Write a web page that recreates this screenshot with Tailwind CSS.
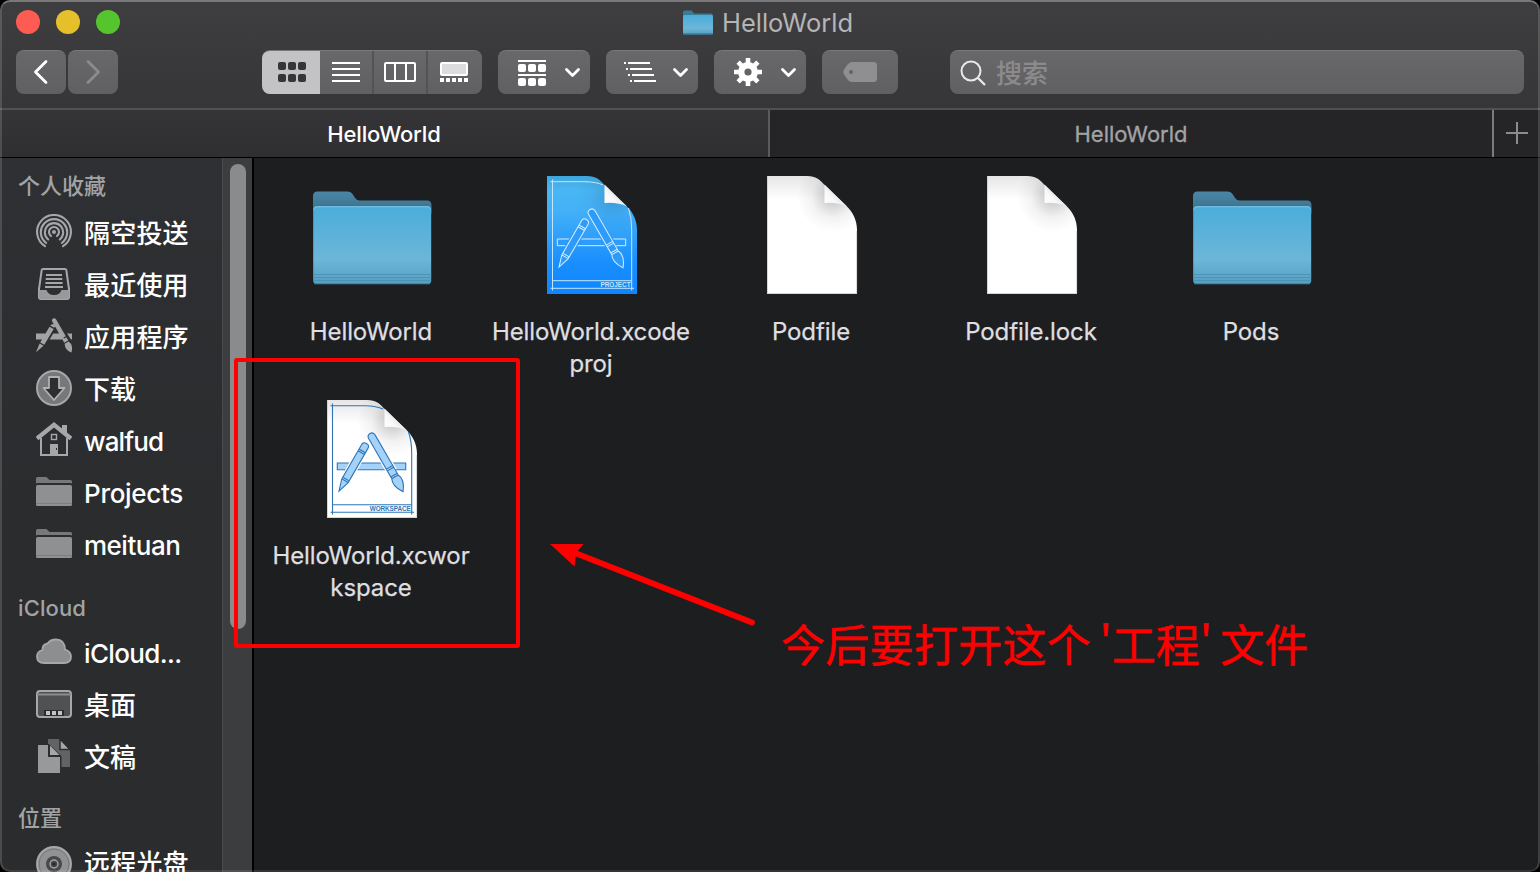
<!DOCTYPE html>
<html lang="zh-CN">
<head>
<meta charset="utf-8">
<title>HelloWorld</title>
<script src="https://cdn.jsdelivr.net/npm/@tailwindcss/browser@4"></script>
</head>
<body class="bg-black">
<svg width="0" height="0" class="absolute" aria-hidden="true">
  <defs>
    <linearGradient id="fback" x1="0" y1="0" x2="0" y2="1"><stop offset="0" stop-color="#4a87a5"/><stop offset=".35" stop-color="#457f9c"/><stop offset="1" stop-color="#39687f"/></linearGradient>
    <linearGradient id="ffront" x1="0" y1="0" x2="0" y2="1"><stop offset="0" stop-color="#4aaddb"/><stop offset=".68" stop-color="#6cb6d8"/><stop offset="1" stop-color="#559fc2"/></linearGradient>
    <linearGradient id="blue" x1="0" y1="0" x2="0" y2="1"><stop offset="0" stop-color="#3fa6dc"/><stop offset=".12" stop-color="#49b6f4"/><stop offset=".3" stop-color="#43b0f8"/><stop offset=".75" stop-color="#188dfe"/><stop offset="1" stop-color="#0f86ff"/></linearGradient>
    <linearGradient id="fold" gradientUnits="userSpaceOnUse" x1="78" y1="34" x2="90" y2="23"><stop offset="0" stop-color="#ffffff"/><stop offset=".6" stop-color="#f8f8f8"/><stop offset="1" stop-color="#e6e6e6"/></linearGradient>
    <radialGradient id="shade" gradientUnits="userSpaceOnUse" cx="86" cy="25" r="36"><stop offset="0" stop-color="#000" stop-opacity=".24"/><stop offset=".3" stop-color="#000" stop-opacity=".15"/><stop offset=".6" stop-color="#000" stop-opacity=".05"/><stop offset="1" stop-color="#000" stop-opacity="0"/></radialGradient>
    <linearGradient id="topshade" x1="0" y1="0" x2="0" y2="1"><stop offset="0" stop-color="#000" stop-opacity=".1"/><stop offset=".2" stop-color="#000" stop-opacity="0"/></linearGradient>
    <symbol id="folder" viewBox="0 0 128 128">
      <path d="M6 40V25q0-4.500 4.500-4.500H41q3 0 4.500 2.500l3 4.500q1.300 2 4 2H120q4.500 0 4.500 5v8z" fill="url(#fback)"/>
      <rect x="6.200" y="35" width="118" height="78" rx="3.500" fill="url(#ffront)"/>
      <path d="M7 38q.5-2.200 3.500-2.200H120q3 0 3.500 2.200" fill="none" stroke="#7cc4e6" stroke-width="1"/>
      <path d="M6.300 103.500h118M6.300 106.500h118M6.300 109.500h118" stroke="#4a90b3" stroke-width="1" opacity=".85"/>
      <path d="M7.500 112.800h115.500" stroke="#3b7c9e" stroke-width="1"/>
    </symbol>
    <symbol id="doc" viewBox="0 0 128 128">
      <path d="M20 5H60C69 5 73 9 77 13.500L99 34.500C106.500 41.500 110 50 110 59V123H20Z" fill="#fff"/>
      <path d="M20 5H60C69 5 73 9 77 13.500L99 34.500C106.500 41.500 110 50 110 59V123H20Z" fill="url(#topshade)"/>
      <path d="M20 5H60C69 5 73 9 77 13.500L99 34.500C106.500 41.500 110 50 110 59V123H20Z" fill="url(#shade)"/>
      <path d="M20.500 122.500V5.500M20 122.500h90M109.600 122V60" stroke="#cccccc" stroke-width=".8" fill="none"/>
      <path d="M77.500 13.500V32Q91 31 100 35.500Z" fill="url(#fold)"/>
    </symbol>
    <symbol id="tools" viewBox="0 0 128 128">
      <path d="M30.300 68H98.700V74.700H30.300Z"/>
      <g transform="translate(59.500 48.500) rotate(30)"><path class="stroke-none" d="M-5.400 18H5.400V34H-5.400Z" fill="var(--gap)"/><path d="M-3.700 3.500Q-3.700 0 0 0T3.700 3.500V43L0 55L-3.700 43ZM-3.700 8.500H3.700M-3.700 10.500H3.700M-3.700 41H3.700M-3.700 43H3.700"/></g>
      <g transform="translate(63 38.500) rotate(-30)"><path class="stroke-none" d="M-5.400 28H5.400V44H-5.400Z" fill="var(--gap)"/><path d="M-3.700 4Q-3.700 0 0 0T3.700 4V50C6.500 55 5 60-.5 67C-5 60-6.500 55-3.700 50ZM-3.700 39H3.700M-3.700 41H3.700M-3.700 48H3.700M-3.700 50H3.700"/></g>
    </symbol>
    <symbol id="sfolder" viewBox="0 0 36 30">
      <path d="M0 6.500V2.500Q0 1 1.500 1H10.500L13.500 4H34.500Q36 4 36 5.500V7.500Q35.500 7 34 7H2Q.5 7 0 7.500Z" fill="#77787a"/>
      <path d="M1.500 9H34.500Q36 9 36 10.500V28.500Q36 30 34.500 30H1.500Q0 30 0 28.500V10.500Q0 9 1.500 9Z" fill="#8f9092"/>
      <path d="M0 27.500H36" stroke="#7c7d7f" stroke-width="1"/>
    </symbol>
  </defs>
</svg>

<div class="relative flex h-[872px] w-[1540px] flex-col overflow-hidden rounded-[10px] bg-[#1d1e20] font-[Inter,'Noto_Sans_CJK_SC',sans-serif]">
  <header class="h-[108px] shrink-0 bg-gradient-to-b from-[#3e3e40] to-[#363638]">
    <div class="grid h-[50px] grid-cols-[1fr_auto_1fr] items-start pl-4">
      <div class="flex gap-4 pt-[10px]">
        <i class="size-6 rounded-full bg-[#fe5b52]"></i><i class="size-6 rounded-full bg-[#e6c02b]"></i><i class="size-6 rounded-full bg-[#55c42d]"></i>
      </div>
      <div class="flex h-[46px] items-center gap-2 pr-[21px]">
        <svg class="h-[26px] w-[32px]" viewBox="0 0 32 26"><path d="M1 8V2.500Q1 .5 3 .5H9.500L12 3.500H29Q31 3.500 31 5.500v4H1Z" fill="#397c9a"/><rect x="1" y="5" width="30" height="19.500" rx="1.500" fill="url(#ffront)"/><path d="M1.500 23.800h29" stroke="#347797"/></svg>
        <span class="text-[25.500px] leading-none text-[#b5b5b7]">HelloWorld</span>
      </div>
      <span></span>
    </div>
    <div class="flex h-11 pl-4 [&>div]:border-t [&>div]:border-[#79797b] [&>div]:bg-gradient-to-b [&>div]:from-[#68686a] [&>div]:to-[#606062] [&>div]:overflow-hidden [&>div]:rounded-lg [&_svg]:-mt-px [&_svg]:h-11 [&_svg]:shrink-0">
      <div class="w-[50px]"><svg width="50" viewBox="0 0 50 44"><path d="M30 11.500L19.500 22L30 32.500" fill="none" stroke="#fff" stroke-width="2.800" stroke-linecap="round" stroke-linejoin="round"/></svg></div>
      <div class="ml-[2px] w-[50px]"><svg width="50" viewBox="0 0 50 44"><path d="M20 11.500L30.500 22L20 32.500" fill="none" stroke="#8b8b8d" stroke-width="2.800" stroke-linecap="round" stroke-linejoin="round"/></svg></div>
      <div class="ml-36 w-[220px]"><svg width="220" viewBox="0 0 220 44">
        <path d="M0 0H58V44H0Z" fill="#c3c3c6"/>
        <g fill="#363638"><rect x="16" y="12" width="8" height="8" rx="2"/><rect x="26" y="12" width="8" height="8" rx="2"/><rect x="36" y="12" width="8" height="8" rx="2"/><rect x="16" y="24" width="8" height="8" rx="2"/><rect x="26" y="24" width="8" height="8" rx="2"/><rect x="36" y="24" width="8" height="8" rx="2"/></g>
        <path d="M111 1V44M165 1V44" stroke="#535355" stroke-width="2"/>
        <path d="M70 13H98M70 19H98M70 25H98M70 31H98" stroke="#fff" stroke-width="2"/>
        <rect x="123" y="13" width="30" height="18" rx="1" fill="none" stroke="#fff" stroke-width="2"/><path d="M133 12V32M144 12V32" stroke="#fff" stroke-width="2"/>
        <rect x="179" y="13" width="26" height="12" rx="1" fill="#dcdcde" stroke="#fff" stroke-width="2"/>
        <path d="M178 30H206" stroke="#fff" stroke-width="4" stroke-dasharray="4 2"/>
      </svg></div>
      <div class="ml-4 w-[92px]"><svg width="92" viewBox="0 0 92 44">
        <path d="M20 11H48M20 25H48" stroke="#fff" stroke-width="2"/>
        <g fill="#fff"><rect x="20" y="14" width="8" height="8" rx="2"/><rect x="30" y="14" width="8" height="8" rx="2"/><rect x="40" y="14" width="8" height="8" rx="2"/><rect x="20" y="28" width="8" height="8" rx="2"/><rect x="30" y="28" width="8" height="8" rx="2"/><rect x="40" y="28" width="8" height="8" rx="2"/></g>
        <path d="M68.500 19.500L74.500 25.500L80.500 19.500" fill="none" stroke="#fff" stroke-width="2.800" stroke-linecap="round" stroke-linejoin="round"/>
      </svg></div>
      <div class="ml-4 w-[92px]"><svg width="92" viewBox="0 0 92 44">
        <path d="M18 13H20M22 13H44M20 19H22M24 19H46M22 25H24M26 25H48M24 31H26M28 31H50" stroke="#fff" stroke-width="2"/>
        <path d="M68.500 19.500L74.500 25.500L80.500 19.500" fill="none" stroke="#fff" stroke-width="2.800" stroke-linecap="round" stroke-linejoin="round"/>
      </svg></div>
      <div class="ml-4 w-[92px]"><svg width="92" viewBox="0 0 92 44">
        <g transform="translate(34 22)" stroke="#fff"><circle r="6.800" fill="none" stroke-width="6.400"/><path d="M0-14V-9M0 14V9M-14 0H-9M14 0H9M-9.900-9.900L-6.500-6.500M9.900 9.900L6.500 6.500M-9.900 9.900L-6.500 6.500M9.900-9.900L6.500-6.500" stroke-width="4.600"/></g>
        <path d="M68.500 19.500L74.500 25.500L80.500 19.500" fill="none" stroke="#fff" stroke-width="2.800" stroke-linecap="round" stroke-linejoin="round"/>
      </svg></div>
      <div class="ml-4 w-[76px]"><svg width="76" viewBox="0 0 76 44"><path fill-rule="evenodd" d="M30 12H51.500Q55 12 55 15.500V28.500Q55 32 51.500 32H30Q27.500 32 25.500 29.500L21.800 24Q20.500 22 21.800 20L25.500 14.500Q27.500 12 30 12ZM29 20a2 2 0 1 0 0 4a2 2 0 1 0 0-4Z" fill="#8f8f91"/></svg></div>
      <div class="ml-[52px] flex w-[574px] items-center"><svg width="46" viewBox="0 0 46 44"><circle cx="21" cy="21" r="9.500" fill="none" stroke="#e9e9eb" stroke-width="2"/><path d="M28 28L35 35" stroke="#e9e9eb" stroke-width="2.300"/></svg><span class="pt-[2px] text-[26px] leading-none font-medium text-[#8b8b8d]">搜索</span></div>
    </div>
  </header>

  <nav class="flex h-[50px] shrink-0 border-t-2 border-b border-t-[#515153] border-b-black text-[22px] [&>div]:flex [&>div]:items-center [&>div]:justify-center [&_span]:pt-[2px]">
    <div class="w-[770px] border-r-2 border-[#5b5b5d] bg-gradient-to-b from-[#353537] to-[#2f2f31] font-medium text-white"><span class="tracking-[-0.15px]">HelloWorld</span></div>
    <div class="w-[724px] border-r-2 border-[#7b7b7d] bg-[#252527] text-[#a3a3a5] [-webkit-text-stroke:0.3px_#a3a3a5]"><span>HelloWorld</span></div>
    <div class="flex-1 bg-[#252527]"><svg width="24" height="24" viewBox="0 0 24 24"><path d="M1 11H23M12 0V22" stroke="#8c8c8e" stroke-width="2"/></svg></div>
  </nav>

  <main class="flex h-[714px]">
    <aside class="flex w-[222px] shrink-0 flex-col overflow-hidden bg-gradient-to-b from-[#2f3033] to-[#2b2c2e] to-50% pt-2 text-[26px] font-medium text-white [&>h2]:flex [&>h2]:shrink-0 [&>h2]:items-center [&>h2]:pl-[18px] [&>h2]:text-[22px] [&>h2]:text-[#a2a3a5] [&>div]:flex [&>div]:h-[52px] [&>div]:shrink-0 [&>div]:items-center [&>div]:gap-3 [&>div]:pl-9 [&_svg]:size-9 [&_svg]:shrink-0 [&_span]:pt-[2px]">
      <h2 class="h-10">个人收藏</h2>
      <div><svg viewBox="0 0 36 36" fill="none" stroke="#a6a7a9" stroke-width="2.100"><circle cx="18" cy="18" r="2" fill="#a6a7a9" stroke="none"/><path d="M15 22A5 5 0 1 1 21 22M12.200 25.500A9.200 9.200 0 1 1 23.800 25.500M10.200 29A13.200 13.200 0 1 1 25.800 29M9 32.200A16.900 16.900 0 1 1 27 32.200" stroke-linecap="round"/></svg><span class="tracking-[0.2px]">隔空投送</span></div>
      <div><svg viewBox="0 0 36 36"><path d="M7 3H29Q30 3 30.300 4L33 23V31Q33 33 31 33H5Q3 33 3 31V23L5.700 4Q6 3 7 3Z" fill="#2d2e30" stroke="#a6a7a9" stroke-width="2"/><path d="M3 24H10.500Q12 29 18 29T25.500 24H33V31Q33 33 31 33H5Q3 33 3 31Z" fill="#98999b"/><path d="M10 9H26M9.700 13H26.300M9.400 17H26.600M9 21H27" stroke="#a6a7a9" stroke-width="1.900"/></svg><span class="tracking-[0.2px]">最近使用</span></div>
      <div><svg viewBox="0 0 36 36"><g fill="#a2a3a5"><path d="M0 15.500H36V21.500H0Z"/>
        <path d="M15.800 6L3 28L8 31L21 9Z" fill="#2d2e30"/><path d="M17 1L31 26L36 23L21 0Z" fill="#2d2e30"/>
        <path d="M15.600 6.500Q17 5.500 18.500 6.600L19.500 7.500L18.300 9.800L14.200 7.600ZM13.500 8.700L17.700 11L8.300 26.800L4.200 24.400ZM3.600 25.500L7.500 27.800L0 34.300Z"/>
        <path d="M16 3Q15.500 1.200 17.200.4T20 1.200L29.800 18.300L25.800 20.600ZM26.400 21.600L30.400 19.300L32.200 22.500L28.200 24.800ZM28.600 25.800L32.600 23.500Q37.500 26.500 35.500 34.500Q29 32.500 28.600 25.800Z"/></g></svg><span class="tracking-[0.2px]">应用程序</span></div>
      <div><svg viewBox="0 0 36 36"><circle cx="18" cy="18" r="17" fill="#77787a" stroke="#a6a7a9" stroke-width="2"/><path d="M13 7H23V18H28.500L18 30L7.500 18H13Z" fill="#2d2e30" stroke="#b0b1b3" stroke-width="1.800" stroke-linejoin="round"/></svg><span>下载</span></div>
      <div><svg viewBox="0 0 36 36"><path d="M5 16V33H31V16" fill="none" stroke="#a6a7a9" stroke-width="2"/><path d="M1 16.500L18 2.800L35 16.500" fill="none" stroke="#a6a7a9" stroke-width="4.200"/><path d="M26 3H31V13L26 8ZM14 22H22V33H14Z" fill="#a6a7a9"/><rect x="15.500" y="12.500" width="5" height="5" fill="none" stroke="#a6a7a9" stroke-width="1.400"/><path d="M20.500 26v2" stroke="#2d2e30"/></svg><span class="tracking-[-0.85px]">walfud</span></div>
      <div><svg viewBox="0 -2 36 36"><use href="#sfolder" width="36" height="30"/></svg><span class="tracking-[-0.3px]">Projects</span></div>
      <div><svg viewBox="0 -2 36 36"><use href="#sfolder" width="36" height="30"/></svg><span class="tracking-[-0.5px]">meituan</span></div>
      <h2 class="mt-5 h-9 tracking-[0.1px]">iCloud</h2>
      <div><svg viewBox="0 0 36 36"><path d="M8 29Q1 29 1 22.500Q1 17.500 6.500 16Q6 10.500 11.500 9.500Q14.500 5.500 20 5.500Q28.500 5.500 29 15.500Q35 17.500 35 22.500Q35 29 28 29Z" fill="#8d8e90" stroke="#a6a7a9" stroke-width="1.800"/></svg><span class="tracking-[-0.65px]">iCloud...</span></div>
      <div><svg viewBox="0 0 36 36"><rect x="1" y="5" width="34" height="26" rx="3" fill="#505153" stroke="#a6a7a9" stroke-width="2"/><path d="M1 8.500H35" stroke="#8c8d8f" stroke-width="2"/><path d="M8 24H28V30H8Z" fill="#2b2c2e"/><path d="M10 27H26" stroke="#c2c3c5" stroke-width="4" stroke-dasharray="4 2"/></svg><span>桌面</span></div>
      <div><svg viewBox="0 0 36 36"><path d="M12 1H23L34 12V29H12Z" fill="#626365"/><path d="M24 1L34 11.500H24Z" fill="#a6a7a9" stroke="#2c2d2f" stroke-width="1.500"/><path d="M1 6H13L25.500 18V36H1Z" fill="#2c2d2f"/><path d="M2 7H12V19H24V35H2Z" fill="#98999b"/><path d="M14 7.500L23.500 17H14Z" fill="#a6a7a9"/></svg><span>文稿</span></div>
      <h2 class="mt-[18px] h-9">位置</h2>
      <div><svg class="mt-1" viewBox="0 0 36 36"><circle cx="18" cy="18" r="17" fill="#919294" stroke="#a6a7a9" stroke-width="2"/><circle cx="18" cy="18" r="15" fill="none" stroke="#77787a" stroke-width="1"/><circle cx="18" cy="18" r="8" fill="#48494b"/><circle cx="18" cy="18" r="4" fill="#48494b" stroke="#a0a1a3" stroke-width="1.500"/><circle cx="18" cy="18" r="1.500" fill="#222"/></svg><span class="tracking-[0.2px]">远程光盘</span></div>
    </aside>
    <div class="w-8 shrink-0 border-r-2 border-l border-r-black border-l-[#4a4b4d] bg-[#3c3d3f] pt-[6px] pl-[7px]"><div class="h-[465px] w-4 rounded-full bg-[#8a8b8d]"></div></div>
    <section class="grid flex-1 auto-rows-[224px] grid-cols-[repeat(5,220px)] content-start pt-[13px] pl-[7px] text-center text-[24px] leading-8 tracking-[-0.1px] text-[#dfdfe0] [-webkit-text-stroke:0.25px_#dfdfe0] [&>figure]:flex [&>figure]:flex-col [&>figure]:items-center [&>figure]:gap-[17px] [&_svg]:size-32 [&_svg]:shrink-0">
      <figure><svg><use href="#folder"/></svg><figcaption>HelloWorld</figcaption></figure>
      <figure><svg viewBox="0 0 128 128">
        <path d="M20 5H60C69 5 73 9 77 13.500L99 34.500C106.500 41.500 110 50 110 59V123H20Z" fill="url(#blue)"/>
        <path d="M20 5H60C69 5 73 9 77 13.500L99 34.500C106.500 41.500 110 50 110 59V123H20Z" fill="url(#shade)" opacity=".6"/>
        <path d="M25.500 8.500V119.500M23.500 10.700H58Q70 11 76 14M101.500 37Q104.700 46 104.700 59V119.500M23.500 117.300H107M25.500 109.700H104.700" fill="none" stroke="#c4e6fd" stroke-width="1"/>
        <text x="103.500" y="115.800" text-anchor="end" textLength="30" font-size="6.400" font-family="Liberation Sans" font-weight="bold" fill="#c4e6fd" class="[-webkit-text-stroke:0]">PROJECT</text>
        <g fill="#2c9bfb" stroke="#d7eefe" stroke-width="1" class="[--gap:#2c9bfb]"><use href="#tools" width="128" height="128"/></g>
        <path d="M77.500 13.500V32Q91 31 100 35.500Z" fill="url(#fold)"/>
      </svg><figcaption>HelloWorld.xcode<br>proj</figcaption></figure>
      <figure><svg><use href="#doc"/></svg><figcaption>Podfile</figcaption></figure>
      <figure><svg><use href="#doc"/></svg><figcaption>Podfile.lock</figcaption></figure>
      <figure><svg><use href="#folder"/></svg><figcaption>Pods</figcaption></figure>
      <figure><svg viewBox="0 0 128 128"><use href="#doc" width="128" height="128"/>
        <path d="M25.500 8.500V119.500M23.500 10.700H58Q70 11 76 14M101.500 37Q104.700 46 104.700 59V119.500M23.500 117.300H107M25.500 109.700H104.700" fill="none" stroke="#2f75b5" stroke-width="1.100"/>
        <text x="103.700" y="115.800" text-anchor="end" textLength="41" font-size="6.400" font-family="Liberation Sans" font-weight="bold" fill="#2f75b5" class="[-webkit-text-stroke:0]">WORKSPACE</text>
        <g fill="#a5d2f8" stroke="#2f75b5" stroke-width="1.100" class="[--gap:#fff]"><use href="#tools" width="128" height="128"/></g>
      </svg><figcaption>HelloWorld.xcwor<br>kspace</figcaption></figure>
    </section>
  </main>

  <!-- Window edge highlight -->
  <div class="pointer-events-none absolute inset-0 rounded-[10px] border-2 border-white/15 border-t-white/30 border-b-white/10"></div>

  <!-- Annotations -->
  <div class="absolute top-[358px] left-[234px] h-[290px] w-[286px] rounded-[3px] border-4 border-[#fe0000]"></div>
  <svg class="absolute top-[530px] left-[540px]" width="230" height="110" viewBox="0 0 230 110"><path d="M30 21L212 92.500" stroke="#fe0000" stroke-width="6" stroke-linecap="round"/><path d="M10 14H43.500L36 23L34.500 36.500Z" fill="#fe0000"/></svg>
  <p class="absolute top-[610px] left-[781px] font-['Noto_Sans_CJK_SC',sans-serif] text-[44px] leading-[66px] whitespace-nowrap text-[#fe0000] [-webkit-text-stroke:0.5px_#fe0000]"><span class="tracking-[0.3px]">今后要打开这个</span><span class="[word-spacing:-1.500px]"> '工程' 文件</span></p>
</div>
</body>
</html>
